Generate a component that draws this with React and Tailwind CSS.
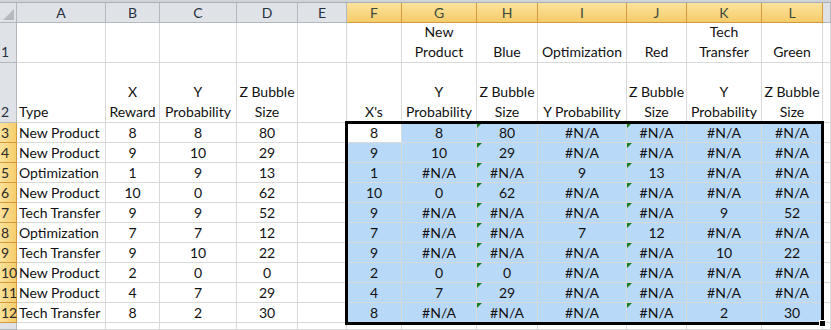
import React from "react";

// column letters after the row-number gutter
const columns = ["A", "B", "C", "D", "E", "F", "G", "H", "I", "J", "K", "L", "M"];
const selectedCols = ["F", "G", "H", "I", "J", "K", "L"];

const headerRow1 = { G: "New\nProduct", H: "Blue", I: "Optimization", J: "Red", K: "Tech\nTransfer", L: "Green" };
const headerRow2 = {
  A: "Type",
  B: "X\nReward",
  C: "Y\nProbability",
  D: "Z Bubble\nSize",
  F: "X's",
  G: "Y\nProbability",
  H: "Z Bubble\nSize",
  I: "Y Probability",
  J: "Z Bubble\nSize",
  K: "Y\nProbability",
  L: "Z Bubble\nSize",
};

const NA = "#N/A";
const dataRows = [
  ["New Product", 8, 8, 80, "", 8, 8, 80, NA, NA, NA, NA],
  ["New Product", 9, 10, 29, "", 9, 10, 29, NA, NA, NA, NA],
  ["Optimization", 1, 9, 13, "", 1, NA, NA, 9, 13, NA, NA],
  ["New Product", 10, 0, 62, "", 10, 0, 62, NA, NA, NA, NA],
  ["Tech Transfer", 9, 9, 52, "", 9, NA, NA, NA, NA, 9, 52],
  ["Optimization", 7, 7, 12, "", 7, NA, NA, 7, 12, NA, NA],
  ["Tech Transfer", 9, 10, 22, "", 9, NA, NA, NA, NA, 10, 22],
  ["New Product", 2, 0, 0, "", 2, 0, 0, NA, NA, NA, NA],
  ["New Product", 4, 7, 29, "", 4, 7, 29, NA, NA, NA, NA],
  ["Tech Transfer", 8, 2, 30, "", 8, NA, NA, NA, NA, 2, 30],
];

function ColHeader({ letter }) {
  const sel = selectedCols.includes(letter);
  return (
    <div
      className={`flex items-center justify-center border-r border-b text-[14px] ${
        sel
          ? "bg-gradient-to-b from-[#fbe39c] to-[#f6cc6a] border-[#d49a3f] text-[#3b4a3c]"
          : "bg-[#dfe3e8] border-[#b3b8bf] text-[#26313f]"
      }`}
    >
      {letter === "M" ? "" : letter}
    </div>
  );
}

function RowHeader({ n, selected, align = "items-center" }) {
  return (
    <div
      className={`flex ${align} pl-[1px] border-r border-b text-[14px] leading-[20px] ${
        selected
          ? "bg-gradient-to-r from-[#fbe29a] to-[#f6cd6b] border-[#d49a3f] text-[#2a2a2a]"
          : "bg-[#dfe3e8] border-[#b3b8bf] text-[#26313f]"
      }`}
    >
      {n}
    </div>
  );
}

function Cell({ children, left, bg = "bg-white", flag, align = "items-center" }) {
  return (
    <div
      className={`relative flex ${align} ${left ? "justify-start pl-[2px]" : "justify-center"} ${bg} border-r border-b border-[#d9d9d9] whitespace-pre-line text-center leading-[20px] text-[#111]`}
    >
      {flag && (
        <span className="absolute left-0 top-0 w-0 h-0 border-t-[5px] border-t-[#16801e] border-r-[5px] border-r-transparent" />
      )}
      {children}
    </div>
  );
}

export default function App() {
  return (
    <div
      className="relative w-[831px] h-[330px] overflow-hidden bg-white text-[14px]"
      style={{ fontFamily: "Lato, 'Liberation Sans', sans-serif" }}
    >
      <div className="grid grid-cols-[17px_89px_54px_77px_61px_49px_55px_75px_61px_89px_60px_75px_61px_1fr] grid-rows-[3px_20px_40px_60px_repeat(10,20px)_1fr] h-full">
        {/* strip above the column headers */}
        <div className="col-span-14 bg-[#cfd4da] border-b border-[#a9afb6]" />

        {/* corner + column letters */}
        <div className="relative bg-[#dfe3e8] border-r border-b border-[#b3b8bf]">
          <span className="absolute right-[2px] bottom-[2px] w-0 h-0 border-b-[11px] border-b-[#b5bac1] border-l-[11px] border-l-transparent" />
        </div>
        {columns.map((c) => (
          <ColHeader key={c} letter={c} />
        ))}

        {/* row 1 */}
        <RowHeader n={1} align="items-end" />
        {columns.map((c) => (
          <Cell key={c} align="items-end">
            {headerRow1[c] || ""}
          </Cell>
        ))}

        {/* row 2 */}
        <RowHeader n={2} align="items-end" />
        {columns.map((c) => (
          <Cell key={c} align="items-end" left={c === "A"}>
            {headerRow2[c] || ""}
          </Cell>
        ))}

        {/* rows 3-12 */}
        {dataRows.map((row, r) => (
          <React.Fragment key={r}>
            <RowHeader n={r + 3} selected />
            {row.map((v, i) => {
              const inSel = i >= 5;
              const active = r === 0 && i === 5;
              return (
                <Cell
                  key={i}
                  left={i === 0}
                  bg={inSel && !active ? "bg-[#b9d9f9]" : "bg-white"}
                  flag={i === 7 || i === 9}
                >
                  {v}
                </Cell>
              );
            })}
            <Cell />
          </React.Fragment>
        ))}

        {/* row 13, mostly below the fold */}
        <RowHeader n="" />
        {columns.map((c) => (
          <Cell key={c} />
        ))}
      </div>

      {/* selection outline over F3:L12 with fill handle */}
      <div className="absolute left-[345px] top-[121px] w-[479px] h-[204px] border-[3px] border-black pointer-events-none" />
      <div className="absolute left-[819px] top-[320px] w-[7px] h-[7px] bg-black border border-white pointer-events-none" />
    </div>
  );
}
